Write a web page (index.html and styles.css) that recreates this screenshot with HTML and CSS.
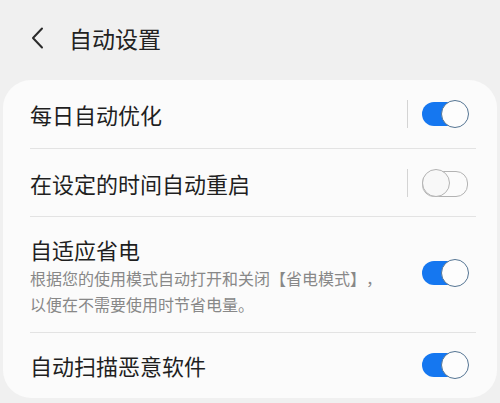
FILE: index.html
```html
<!DOCTYPE html>
<html lang="zh">
<head>
<meta charset="utf-8">
<link rel="stylesheet" href="styles.css">
</head>
<body>
<header class="topbar">
  <svg class="back" width="14" height="22" viewBox="0 0 14 22"><path d="M11 1.5 L2 11 L11 20.5" fill="none" stroke="#2b2b2b" stroke-width="2" stroke-linecap="round" stroke-linejoin="round"/></svg>
  <h1 class="title">自动设置</h1>
</header>
<section class="card">
  <div class="row r1">
    <div class="text"><div class="label">每日自动优化</div></div>
    <span class="vdiv"></span>
    <span class="toggle on"><span class="thumb"></span></span>
  </div>
  <div class="row r2">
    <div class="text"><div class="label">在设定的时间自动重启</div></div>
    <span class="vdiv"></span>
    <span class="toggle off"><span class="thumb"></span></span>
  </div>
  <div class="row r3">
    <div class="text">
      <div class="label">自适应省电</div>
      <div class="sub">根据您的使用模式自动打开和关闭【省电模式】，<br>以便在不需要使用时节省电量。</div>
    </div>
    <span class="toggle on"><span class="thumb"></span></span>
  </div>
  <div class="row r4">
    <div class="text"><div class="label">自动扫描恶意软件</div></div>
    <span class="toggle on"><span class="thumb"></span></span>
  </div>
</section>
</body>
</html>
```
FILE: styles.css
```css
* { box-sizing: border-box; }
html, body { margin: 0; padding: 0; }
body {
  width: 500px;
  height: 403px;
  overflow: hidden;
  background: #f0f0f0;
  font-family: "Noto Sans CJK SC", "Noto Sans", sans-serif;
  color: #1f1f1f;
  text-spacing-trim: space-all;
}
.topbar {
  height: 80px;
  display: flex;
  align-items: center;
  padding-left: 31px;
  padding-bottom: 4px;
}
.back { display: block; margin-right: 24px; }
.title {
  margin: 0;
  font-size: 23px;
  font-weight: 400;
  line-height: 30px;
  color: #222;
}
.card {
  margin: 0 3px;
  background: #fbfbfb;
  border-radius: 28px;
  padding: 0 21px 0 27px;
  height: 318px;
}
.row {
  display: flex;
  align-items: center;
  border-bottom: 1px solid #e3e3e3;
}
.r1 { height: 69px; }
.r2 { height: 68px; }
.r3 { height: 116px; padding: 16px 0 14px; }
.r4 { height: 64px; border-bottom: none; }
.text { flex: 1; }
.label {
  font-size: 22px;
  line-height: 30px;
  color: #1f1f1f;
}
.sub {
  font-size: 16px;
  line-height: 26px;
  color: #888888;
  margin-top: 1px;
  white-space: nowrap;
  text-spacing-trim: space-all;
}
.vdiv {
  width: 1px;
  height: 28px;
  background: #d4d4d4;
  margin-right: 14px;
}
.toggle {
  position: relative;
  width: 46px;
  height: 28px;
  margin-right: 8px;
  flex: none;
}
.toggle::before {
  content: "";
  position: absolute;
  left: 0;
  right: 0;
  top: 2px;
  height: 24px;
  border-radius: 12px;
}
.toggle.on::before { background: #1577f0; }
.toggle.off::before { border: 1.5px solid #b3b3b3; background: transparent; }
.thumb {
  position: absolute;
  top: 0;
  width: 28px;
  height: 28px;
  border-radius: 50%;
  background: #fdfdfd;
}
.toggle.on .thumb { right: -1px; border: 1.5px solid #557593; }
.toggle.off .thumb { left: 0; border: 1.5px solid #b3b3b3; background: #f8f8f8; }
.r3 .toggle { align-self: center; margin-top: -6px; }
```
